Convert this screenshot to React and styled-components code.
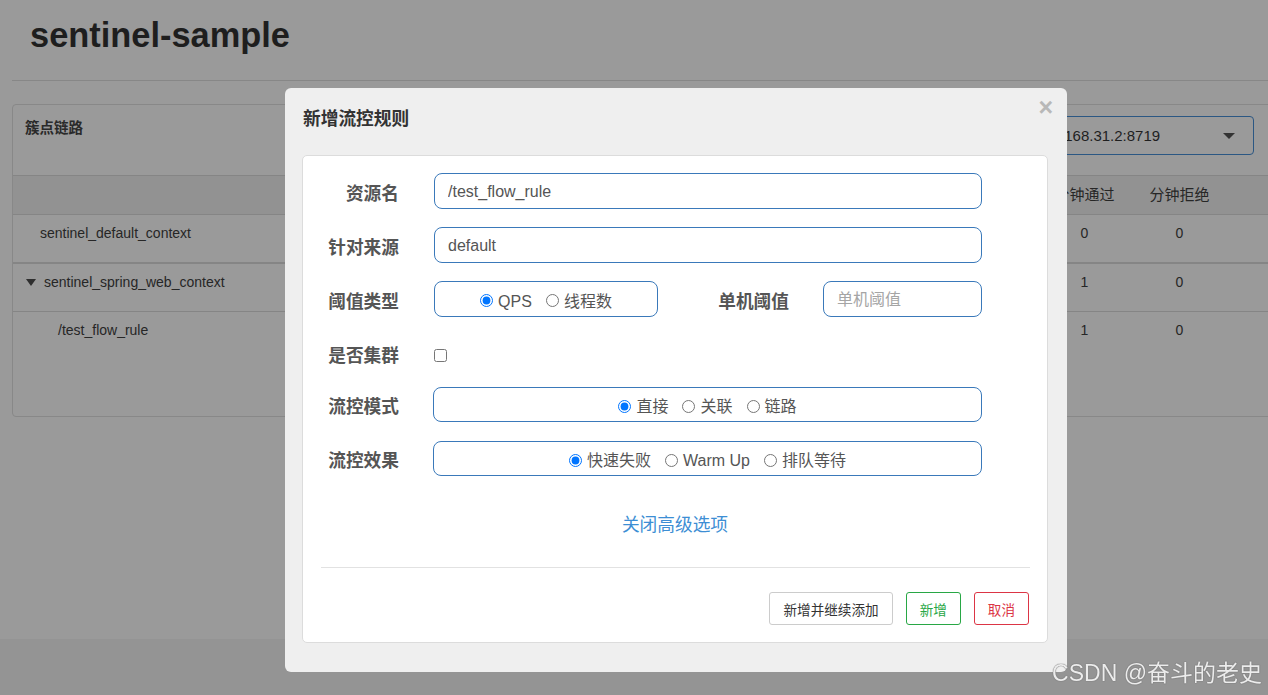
import React from 'react';
import styled, { createGlobalStyle } from 'styled-components';

const Global = createGlobalStyle`
  html, body { margin: 0; padding: 0; }
  body {
    background: #949494;
    font-family: "Liberation Sans", "Noto Sans CJK SC", sans-serif;
    overflow: hidden;
  }
`;

const Page = styled.div`
  background: #9a9a9a;
  height: 639px;
  padding-left: 12px;
  box-sizing: border-box;
  overflow: hidden;
`;

const Header = styled.div`
  height: 80px;
  padding: 12px 0 0 18px;
  box-sizing: border-box;
`;

const Title = styled.h1`
  margin: 0;
  font-size: 34.4px;
  line-height: 46px;
  font-weight: bold;
  color: #1e1e1e;
`;

const Rule = styled.div`
  height: 1px;
  background: #878787;
`;

const Panel = styled.div`
  margin-top: 23px;
  width: 1300px;
  height: 313px;
  border: 1px solid #888;
  border-radius: 4px;
  box-sizing: border-box;
  overflow: hidden;
`;

const PanelHeading = styled.div`
  height: 70px;
  display: flex;
  align-items: flex-start;
  justify-content: space-between;
  padding: 0 0 0 12px;
  box-sizing: border-box;
`;

const PanelTitle = styled.div`
  margin-top: 13px;
  font-size: 14.5px;
  line-height: 20px;
  font-weight: bold;
  color: #2a2a2a;
`;

const Select = styled.div`
  margin: 11px 57px 0 0;
  width: 231px;
  height: 39px;
  box-sizing: border-box;
  border: 1px solid #2b5783;
  border-radius: 4px;
  display: flex;
  align-items: center;
  justify-content: space-between;
  padding: 0 18px 0 11px;
  font-size: 15px;
  color: #1f1f1f;
`;

const Caret = styled.span`
  width: 0;
  height: 0;
  border-left: 6px solid transparent;
  border-right: 6px solid transparent;
  border-top: 6px solid #333;
`;

const Row = styled.div`
  display: grid;
  grid-template-columns: 1024px 95px 95px 1fr;
  border-top: ${p => (p.$thick ? 2 : 1)}px solid #858585;
  height: ${p => (p.$head ? 38 : 47)}px;
  background: ${p => (p.$head ? '#929292' : 'transparent')};
  align-items: ${p => (p.$head ? 'center' : 'start')};
  font-size: 14px;
  line-height: 20px;
  color: #262626;
`;

const NameCell = styled.div`
  padding: 8px 0 0 ${p => p.$indent}px;
  display: flex;
  align-items: center;
`;

const Tri = styled.span`
  width: 0;
  height: 0;
  border-left: 5px solid transparent;
  border-right: 5px solid transparent;
  border-top: 7px solid #2f2f2f;
  margin-right: 8px;
`;

const NumCell = styled.div`
  text-align: center;
  padding-top: ${p => (p.$head ? 0 : 8)}px;
  font-size: ${p => (p.$head ? 15 : 14)}px;
`;

const Modal = styled.div`
  position: fixed;
  left: 285px;
  top: 88px;
  width: 782px;
  height: 584px;
  background: #efefef;
  border-radius: 6px;
  box-sizing: border-box;
  padding: 0 19px 29px 17px;
  display: flex;
  flex-direction: column;
`;

const ModalHead = styled.div`
  height: 67px;
  padding: 19px 0 0 1px;
  box-sizing: border-box;
  font-size: 17.7px;
  line-height: 24px;
  font-weight: bold;
  color: #333;
`;

const Close = styled.span`
  position: absolute;
  top: 7px;
  right: 14px;
  font-size: 25px;
  line-height: 25px;
  font-weight: bold;
  color: #b8b8b8;
`;

const Card = styled.div`
  flex: 1;
  background: #fff;
  border: 1px solid #dcdcdc;
  border-radius: 5px;
  display: flex;
  flex-direction: column;
`;

const Form = styled.div`
  padding-top: 17px;
  display: flex;
  flex-direction: column;
  gap: 18px;
`;

const FormRow = styled.div`
  display: flex;
  align-items: center;
  height: ${p => p.$h || 36}px;
  margin-top: ${p => p.$mt || 0}px;
`;

const Label = styled.div`
  width: ${p => p.$w || 96}px;
  margin-right: ${p => p.$gap || 35}px;
  text-align: right;
  font-size: 17.7px;
  line-height: 24px;
  font-weight: bold;
  color: #555;
  padding-top: ${p => (p.$shift != null ? p.$shift : 5)}px;
`;

const Input = styled.input`
  width: ${p => p.$w || 548}px;
  height: 36px;
  box-sizing: border-box;
  border: 1px solid #3a79ba;
  border-radius: 8px;
  padding: 1px 13px 0;
  font-family: "Liberation Sans", "Noto Sans CJK SC", sans-serif;
  font-size: 16px;
  color: #555;
  outline: none;
  &::placeholder { color: #a5a5a5; }
`;

const RadioBox = styled.div`
  width: ${p => p.$w}px;
  height: ${p => p.$h || 36}px;
  margin-left: ${p => p.$ml || 0}px;
  box-sizing: border-box;
  border: 1px solid #3a79ba;
  border-radius: 8px;
  display: flex;
  justify-content: center;
  align-items: center;
  gap: 14px;
  padding-top: 5px;
`;

const Option = styled.label`
  display: inline-flex;
  align-items: center;
  gap: 5px;
  font-size: 16px;
  line-height: 20px;
  color: #555;
  input { margin: 0 0 2px 0; width: 13px; height: 13px; }
`;

const Check = styled.input`
  margin: 7px 0 0 0;
  width: 13px;
  height: 13px;
`;

const LinkText = styled.div`
  margin-top: 37px;
  text-align: center;
  font-size: 17.7px;
  line-height: 25px;
  color: #3d8ed4;
`;

const Divider = styled.div`
  margin: 29px 17px 0 18px;
  height: 1px;
  background: #e2e2e2;
`;

const Footer = styled.div`
  display: flex;
  justify-content: flex-end;
  gap: 13px;
  padding: 24px 18px 0 0;
`;

const Btn = styled.button`
  height: 33px;
  padding: 0 13px;
  background: #fff;
  border: 1px solid ${p => p.$c || '#ccc'};
  color: ${p => (p.$c ? p.$c : '#333')};
  border-radius: 3px;
  font-family: "Liberation Sans", "Noto Sans CJK SC", sans-serif;
  font-size: 13.6px;
`;

const Watermark = styled.div`
  position: fixed;
  right: 6px;
  bottom: 8px;
  font-size: 23px;
  line-height: 28px;
  color: #ececec;
  text-shadow: 0 0 1px #666, 0 0 1px #666;
  font-family: "Liberation Sans", "Noto Sans CJK SC", sans-serif;
`;

const rows = [
  { name: 'sentinel_default_context', indent: 27, a: '0', b: '0' },
  { name: 'sentinel_spring_web_context', indent: 13, tri: true, a: '1', b: '0', thick: true },
  { name: '/test_flow_rule', indent: 45, a: '1', b: '0' },
];

export default function App() {
  return (
    <>
      <Global />
      <Page>
        <Header>
          <Title>sentinel-sample</Title>
        </Header>
        <Rule />
        <Panel>
          <PanelHeading>
            <PanelTitle>簇点链路</PanelTitle>
            <Select>
              <span>192.168.31.2:8719</span>
              <Caret />
            </Select>
          </PanelHeading>
          <Row $head>
            <div />
            <NumCell $head>分钟通过</NumCell>
            <NumCell $head>分钟拒绝</NumCell>
            <div />
          </Row>
          {rows.map(r => (
            <Row key={r.name} $thick={r.thick}>
              <NameCell $indent={r.indent}>
                {r.tri && <Tri />}
                {r.name}
              </NameCell>
              <NumCell>{r.a}</NumCell>
              <NumCell>{r.b}</NumCell>
              <div />
            </Row>
          ))}
        </Panel>
      </Page>

      <Modal>
        <Close>×</Close>
        <ModalHead>新增流控规则</ModalHead>
        <Card>
          <Form>
            <FormRow>
              <Label>资源名</Label>
              <Input defaultValue="/test_flow_rule" />
            </FormRow>
            <FormRow>
              <Label>针对来源</Label>
              <Input defaultValue="default" />
            </FormRow>
            <FormRow>
              <Label>阈值类型</Label>
              <RadioBox $w={224}>
                <Option><input type="radio" name="grade" defaultChecked />QPS</Option>
                <Option><input type="radio" name="grade" />线程数</Option>
              </RadioBox>
              <Label $w={131} $gap={34}>单机阈值</Label>
              <Input $w={159} placeholder="单机阈值" />
            </FormRow>
            <FormRow $h={34}>
              <Label $shift={8}>是否集群</Label>
              <Check type="checkbox" />
            </FormRow>
            <FormRow $h={35}>
              <Label>流控模式</Label>
              <RadioBox $w={549} $h={35} $ml={-1}>
                <Option><input type="radio" name="mode" defaultChecked />直接</Option>
                <Option><input type="radio" name="mode" />关联</Option>
                <Option><input type="radio" name="mode" />链路</Option>
              </RadioBox>
            </FormRow>
            <FormRow $h={35} $mt={1}>
              <Label>流控效果</Label>
              <RadioBox $w={549} $h={35} $ml={-1}>
                <Option><input type="radio" name="eff" defaultChecked />快速失败</Option>
                <Option><input type="radio" name="eff" />Warm Up</Option>
                <Option><input type="radio" name="eff" />排队等待</Option>
              </RadioBox>
            </FormRow>
          </Form>
          <LinkText>关闭高级选项</LinkText>
          <Divider />
          <Footer>
            <Btn>新增并继续添加</Btn>
            <Btn $c="#28a745">新增</Btn>
            <Btn $c="#dc3545">取消</Btn>
          </Footer>
        </Card>
      </Modal>
      <Watermark>CSDN @奋斗的老史</Watermark>
    </>
  );
}
